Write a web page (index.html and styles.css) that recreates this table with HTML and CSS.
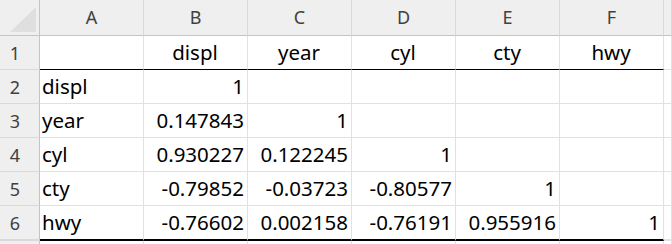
FILE: index.html
```html
<!DOCTYPE html>
<html lang="en">
<head>
<meta charset="utf-8">
<title>Correlation matrix</title>
<link rel="stylesheet" href="styles.css">
</head>
<body>
<div class="sheet">
  <div class="corner">
    <svg class="corner-mark" width="39" height="35" viewBox="0 0 39 35"><polygon points="10,32 36,32 36,7" fill="#dfdfdf"/></svg>
  </div>
  <div class="colhead">A</div>
  <div class="colhead">B</div>
  <div class="colhead">C</div>
  <div class="colhead">D</div>
  <div class="colhead">E</div>
  <div class="colhead">F</div>
  <div class="colhead"></div>

  <div class="rowhead">1</div>
  <div class="cell top"></div>
  <div class="cell top mid">displ</div>
  <div class="cell top mid">year</div>
  <div class="cell top mid">cyl</div>
  <div class="cell top mid">cty</div>
  <div class="cell top mid">hwy</div>
  <div class="cell"></div>

  <div class="rowhead">2</div>
  <div class="cell">displ</div>
  <div class="cell num">1</div>
  <div class="cell"></div>
  <div class="cell"></div>
  <div class="cell"></div>
  <div class="cell"></div>
  <div class="cell"></div>

  <div class="rowhead">3</div>
  <div class="cell">year</div>
  <div class="cell num">0.147843</div>
  <div class="cell num">1</div>
  <div class="cell"></div>
  <div class="cell"></div>
  <div class="cell"></div>
  <div class="cell"></div>

  <div class="rowhead">4</div>
  <div class="cell">cyl</div>
  <div class="cell num">0.930227</div>
  <div class="cell num">0.122245</div>
  <div class="cell num">1</div>
  <div class="cell"></div>
  <div class="cell"></div>
  <div class="cell"></div>

  <div class="rowhead">5</div>
  <div class="cell">cty</div>
  <div class="cell num">-0.79852</div>
  <div class="cell num">-0.03723</div>
  <div class="cell num">-0.80577</div>
  <div class="cell num">1</div>
  <div class="cell"></div>
  <div class="cell"></div>

  <div class="rowhead last">6</div>
  <div class="cell end">hwy</div>
  <div class="cell end num">-0.76602</div>
  <div class="cell end num">0.002158</div>
  <div class="cell end num">-0.76191</div>
  <div class="cell end num">0.955916</div>
  <div class="cell end num">1</div>
  <div class="cell last"></div>

  <div class="rowhead"></div>
  <div class="cell"></div>
  <div class="cell"></div>
  <div class="cell"></div>
  <div class="cell"></div>
  <div class="cell"></div>
  <div class="cell"></div>
  <div class="cell"></div>
</div>
</body>
</html>
```
FILE: styles.css
```css
html, body {
  margin: 0;
  padding: 0;
  background: #ffffff;
  overflow: hidden;
}

.sheet {
  display: grid;
  grid-template-columns: 40px repeat(6, 104px) 1fr;
  grid-template-rows: 36px repeat(5, 34px) 35px 34px;
  width: 672px;
  font-family: "Noto Sans", "Open Sans", sans-serif;
}

.sheet > div {
  box-sizing: border-box;
  white-space: nowrap;
  overflow: hidden;
}

.corner {
  background: #efefef;
  border-right: 1px solid #c4c4c4;
  border-bottom: 1px solid #c4c4c4;
}

.corner-mark {
  display: block;
}

.colhead {
  background: #efefef;
  border-right: 1px solid #dadada;
  border-bottom: 1px solid #c4c4c4;
  color: #404040;
  font-size: 18px;
  line-height: 33px;
  padding-top: 1px;
  text-align: center;
}

.rowhead {
  background: #efefef;
  border-right: 1px solid #c4c4c4;
  border-bottom: 1px solid #dadada;
  color: #404040;
  font-size: 18px;
  display: flex;
  align-items: center;
  justify-content: center;
  padding-right: 9px;
}

.rowhead.last {
  border-bottom-width: 2px;
}

.cell {
  border-right: 1px solid #e1e1e1;
  border-bottom: 1px solid #e1e1e1;
  color: #000000;
  font-size: 20.5px;
  line-height: 33px;
  padding: 0 3px 0 2px;
  text-align: left;
}

.cell.mid {
  text-align: center;
}

.cell.num {
  text-align: right;
}

.cell.top {
  border-bottom-color: #000000;
}

.cell.end {
  border-bottom: 2px solid #000000;
}

.cell.last {
  border-bottom-width: 2px;
}
```
